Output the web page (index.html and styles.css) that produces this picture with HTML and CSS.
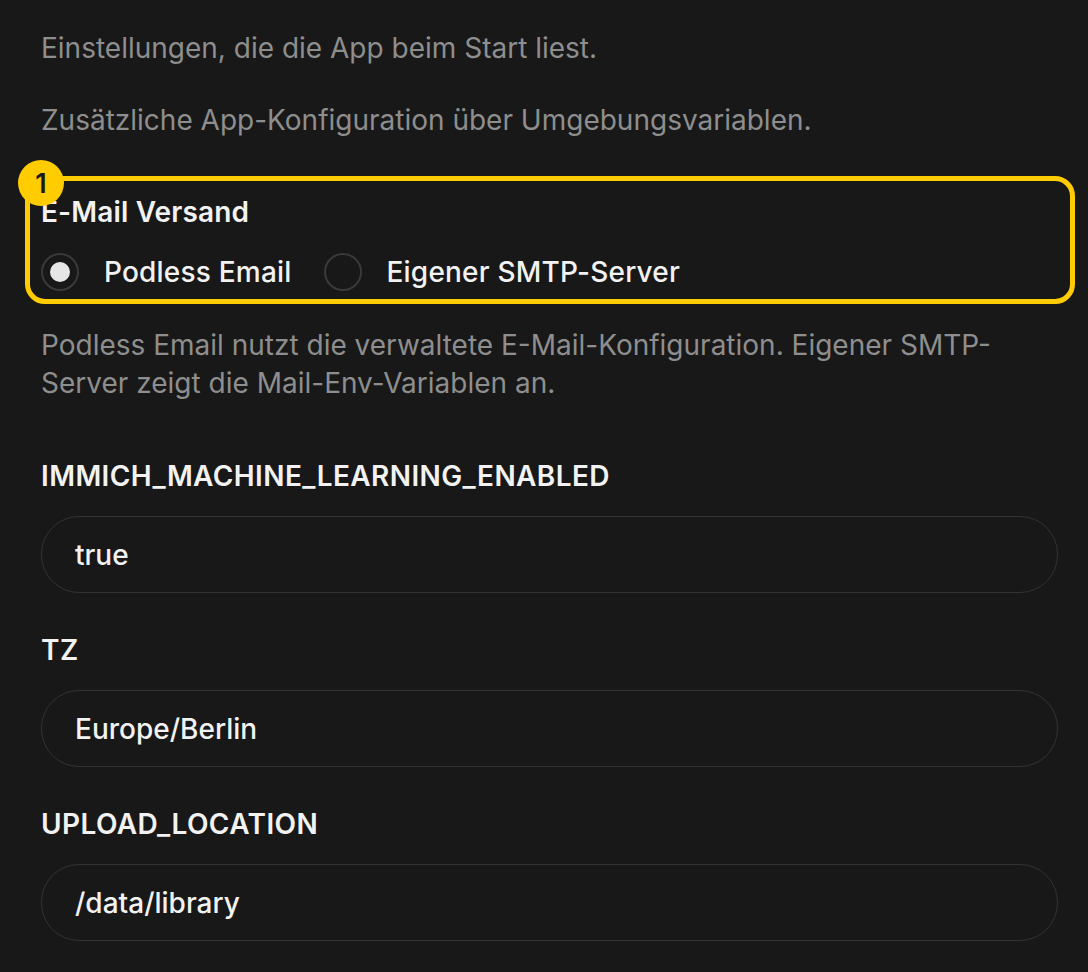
FILE: index.html
```html
<!DOCTYPE html>
<html lang="de">
<head>
<meta charset="utf-8">
<link rel="stylesheet" href="styles.css">
</head>
<body>
<main class="panel">
  <p class="muted intro">Einstellungen, die die App beim Start liest.</p>
  <p class="muted intro2">Zusätzliche App-Konfiguration über Umgebungsvariablen.</p>

  <div class="highlight">
    <span class="badge">1</span>
    <fieldset class="group">
      <legend class="group-title">E-Mail Versand</legend>
      <div class="radios">
        <label class="radio">
          <span class="dot checked"></span>
          <span class="radio-label">Podless Email</span>
        </label>
        <label class="radio">
          <span class="dot"></span>
          <span class="radio-label">Eigener SMTP-Server</span>
        </label>
      </div>
    </fieldset>
  </div>

  <p class="muted help">Podless Email nutzt die verwaltete E-Mail-Konfiguration. Eigener SMTP-Server zeigt die Mail-Env-Variablen an.</p>

  <div class="field first">
    <div class="field-label">IMMICH_MACHINE_LEARNING_ENABLED</div>
    <div class="input">true</div>
  </div>
  <div class="field">
    <div class="field-label">TZ</div>
    <div class="input">Europe/Berlin</div>
  </div>
  <div class="field">
    <div class="field-label">UPLOAD_LOCATION</div>
    <div class="input">/data/library</div>
  </div>
</main>
</body>
</html>
```
FILE: styles.css
```css
html, body {
  margin: 0;
  padding: 0;
  background: #181818;
}
body {
  font-family: Inter, "Noto Sans", sans-serif;
  color: #f2f2f2;
  font-size: 28px;
}
.panel {
  padding: 29px 30px 0 41px;
  display: flex;
  flex-direction: column;
}
p { margin: 0; }
.muted {
  color: #8e8e8e;
  line-height: 38px;
}
.intro2 { margin-top: 34px; }
.highlight {
  position: relative;
  margin-top: 55px;
}
.highlight::before {
  content: "";
  position: absolute;
  left: -16px;
  right: -17px;
  top: -18px;
  bottom: -13px;
  border: 5px solid #ffcc00;
  border-radius: 20px;
  pointer-events: none;
}
.badge {
  position: absolute;
  left: -23px;
  top: -34px;
  width: 46px;
  height: 46px;
  border-radius: 50%;
  background: #ffcc00;
  color: #1a1a1a;
  font-weight: 600;
  font-size: 27px;
  display: flex;
  align-items: center;
  justify-content: center;
  z-index: 2;
}
.group {
  border: 0;
  margin: 0;
  padding: 0;
}
.group-title {
  padding: 0;
  font-weight: 600;
  line-height: 36px;
  letter-spacing: 0.15px;
}
.radios {
  display: flex;
  gap: 32px;
  margin-top: 23px;
}
.radio {
  display: flex;
  align-items: center;
  gap: 25px;
  font-weight: 500;
  letter-spacing: 0.2px;
}
.dot {
  width: 34px;
  height: 34px;
  border: 2px solid #3a3a3a;
  border-radius: 50%;
  box-sizing: content-box;
  display: flex;
  align-items: center;
  justify-content: center;
}
.dot.checked::after {
  content: "";
  width: 20px;
  height: 20px;
  border-radius: 50%;
  background: #e6e6e6;
}
.help {
  margin-top: 35px;
}
.field {
  display: flex;
  flex-direction: column;
}
.field.first { margin-top: 55px; }
.field + .field { margin-top: 38px; }
.field-label {
  font-weight: 600;
  line-height: 38px;
  letter-spacing: 0.4px;
}
.input {
  margin-top: 21px;
  height: 75px;
  border: 1px solid #333333;
  border-radius: 38px;
  display: flex;
  align-items: center;
  padding-left: 33px;
  font-weight: 500;
  background: #181818;
}
```
